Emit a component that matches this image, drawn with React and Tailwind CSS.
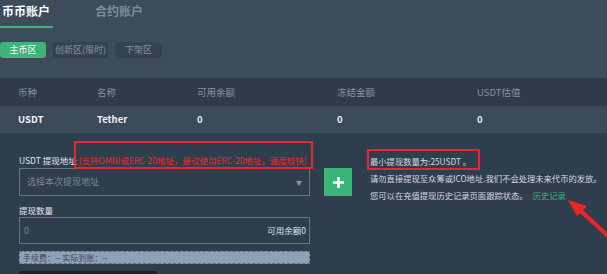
import React from 'react';

const cols = ['w-[79px]', 'w-[100px]', 'w-[140px]', 'w-[140px]', 'flex-1'];

export default function App() {
    const head = ['币种', '名称', '可用余额', '冻结金额', 'USDT估值'];
    const row = ['USDT', 'Tether', '0', '0', '0'];

    return (
        <div
            className="relative w-[607px] h-[274px] overflow-hidden bg-[#2f3e4c] whitespace-nowrap"
            style={{ fontFamily: '"Noto Sans CJK SC", "Noto Sans", sans-serif' }}
        >
            {/* account tabs + zones */}
            <div className="h-[78px] bg-[#3c4c5b]">
                <div className="flex items-start h-[28px]">
                    <div className="w-[53px] h-[28px] border-b-2 border-[#3fb37a]">
                        <span className="block pl-[2px] pt-[3px] text-[12px] leading-[16px] font-bold text-white">币币账户</span>
                    </div>
                    <span className="ml-[42px] pt-[3px] text-[12px] leading-[16px] font-bold text-[#7f8c98]">合约账户</span>
                </div>
                <div className="flex gap-[7px] mt-[14px]">
                    <div className="w-[46px] h-[16px] rounded-[3px] bg-[#3fb37a] text-white text-[9px] leading-[16px] text-center">主币区</div>
                    <div className="w-[55px] h-[16px] rounded-[3px] bg-[#34434f] text-[#8894a0] text-[9px] leading-[16px] text-center">创新区(限时)</div>
                    <div className="w-[47px] h-[16px] rounded-[3px] bg-[#34434f] text-[#8894a0] text-[9px] leading-[16px] text-center">下架区</div>
                </div>
            </div>

            {/* table */}
            <div className="flex h-[28px] items-center bg-[#2e3c49] pl-[18px] text-[9.5px] text-[#8592a0]">
                {head.map((h, i) => (
                    <div key={i} className={cols[i]}>{h}</div>
                ))}
            </div>
            <div className="flex h-[27px] items-center bg-[#3a4a58] pl-[18px] text-[9.5px] font-semibold text-[#eef2f6]">
                {row.map((c, i) => (
                    <div key={i} className={cols[i]}>{c}</div>
                ))}
            </div>

            {/* withdraw form */}
            <div className="flex items-start pl-[19px]">
                <div className="w-[291px]">
                    <div className="mt-[21px] text-[8.5px] leading-[12px] text-[#e3e8ed]">
                        USDT 提现地址
                        <span className="ml-[2px] text-[#f0262b]">(支持OMNI或ERC-20地址，建议使用ERC-20地址，速度较快)</span>
                    </div>
                    <div className="mt-[2px] flex h-[28px] items-center justify-between border border-[#67737f] px-[7px]">
                        <span className="text-[9px] text-[#7b8793]">选择本次提现地址</span>
                        <span className="text-[6px] text-[#8a96a3]">▼</span>
                    </div>
                    <div className="mt-[8px] text-[8.5px] leading-[12px] text-[#e3e8ed]">提现数量</div>
                    <div className="mt-[1px] flex h-[27px] items-center justify-between border border-[#67737f] pl-[4px] pr-[3px]">
                        <span className="text-[9px] text-[#7b8793]">0</span>
                        <span className="text-[8.5px] text-[#dfe4ea]">可用余额0</span>
                    </div>
                    <div className="mt-[7px] h-[13px] border border-dashed border-[#5b6d80] bg-[#8ea2b7] pl-[3px] text-[8px] leading-[11px] text-[#3b4757]">
                        手续费：-- 实际到账：--
                    </div>
                    <div className="mt-[7px] h-[6px] w-[138px] bg-[#1c232b]" />
                </div>

                <div className="ml-[14px] mt-[35px] flex h-[28px] w-[28px] items-center justify-center bg-[#3bb478]">
                    <svg width="13" height="13" viewBox="0 0 13 13">
                        <path d="M6.5 1v11M1 6.5h11" stroke="#fff" strokeWidth="2.6" />
                    </svg>
                </div>

                <div className="ml-[18px] mt-[20px] text-[8.3px] leading-[17px] text-[#d5dbe1]">
                    <div>最小提现数量为:25USDT 。</div>
                    <div>请勿直接提现至众筹或ICO地址.我们不会处理未来代币的发放。</div>
                    <div>
                        您可以在充值提现历史记录页面跟踪状态。
                        <span className="ml-[5px] text-[#3fb37a]">历史记录</span>
                    </div>
                </div>
            </div>

            {/* annotations */}
            <div className="absolute left-[74px] top-[141px] w-[239px] h-[28px] border-2 border-[#e8262b]" />
            <div className="absolute left-[367px] top-[149px] w-[113px] h-[21px] border-2 border-[#e8262b]" />
            <svg className="absolute left-0 top-0" width="607" height="274" viewBox="0 0 607 274">
                <path d="M610 238 L580 210" stroke="#ee2424" strokeWidth="4" />
                <path d="M568 200 L587 206 L577 216 Z" fill="#ee2424" />
            </svg>
        </div>
    );
}
